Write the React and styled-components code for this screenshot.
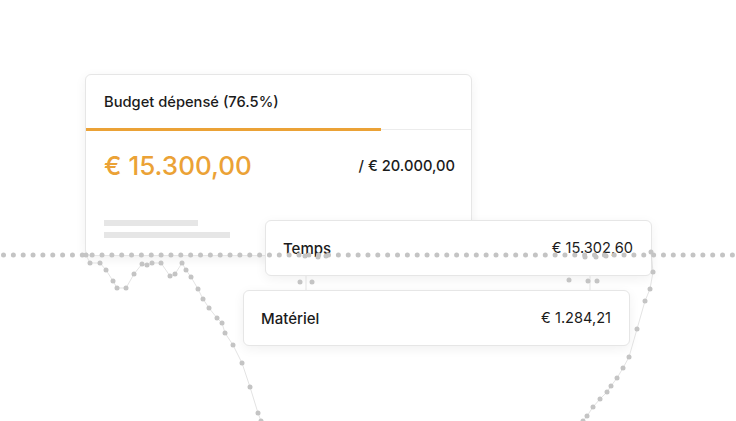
import React from 'react'
import styled, { createGlobalStyle } from 'styled-components'

const GlobalStyle = createGlobalStyle`
  body {
    margin: 0;
    background: #ffffff;
    font-family: Inter, "Noto Sans", "Liberation Sans", sans-serif;
    color: #1b1b1b;
  }
`

const Stage = styled.div`
  position: relative;
  width: 736px;
  height: 421px;
  overflow: hidden;
  background: #ffffff;
`

const Scene = styled.div`
  display: flex;
  flex-direction: column;
  align-items: flex-start;
  padding: 74px 0 0 85px;
`

const Card = styled.div`
  position: relative;
  box-sizing: border-box;
  background: #ffffff;
  border: 1px solid #e6e6e6;
  border-radius: 6px;
  box-shadow: 0 3px 12px rgba(0, 0, 0, 0.06);
`

const BudgetCard = styled(Card)`
  width: 387px;
  height: 182px;
  display: flex;
  flex-direction: column;
`

const CardHeader = styled.div`
  height: 53px;
  display: flex;
  align-items: center;
  padding: 0 18px;
  font-size: 14.7px;
  font-weight: 500;
`

const Progress = styled.div`
  height: 3px;
  display: flex;
  align-items: center;
`

const ProgressFill = styled.div`
  height: 3px;
  background: #eba236;
`

const ProgressRest = styled.div`
  flex: 1;
  height: 1px;
  background: #ececec;
`

const AmountRow = styled.div`
  display: flex;
  align-items: center;
  justify-content: space-between;
  margin-top: 19px;
  padding: 0 16px 0 18px;
`

const Spent = styled.span`
  font-size: 26px;
  line-height: 32px;
  font-weight: 500;
  color: #eba236;
`

const Total = styled.span`
  font-size: 14.7px;
  font-weight: 500;
`

const Skeleton = styled.div`
  display: flex;
  flex-direction: column;
  gap: 6px;
  margin-top: 38px;
  padding-left: 18px;
`

const SkeletonBar = styled.div`
  width: ${p => p.$w}px;
  height: 6px;
  background: #e6e6e6;
`

const LineCard = styled(Card)`
  width: 387px;
  height: 56px;
  display: flex;
  align-items: center;
  justify-content: space-between;
  padding: 0 18px 0 17px;
  margin-left: ${p => p.$indent}px;
  margin-top: ${p => p.$top}px;
`

const LineLabel = styled.span`
  font-size: 15px;
  font-weight: 500;
`

const LineValue = styled.span`
  font-size: 14.6px;
  font-weight: 400;
`

const Overlay = styled.svg`
  position: absolute;
  inset: 0;
  width: 736px;
  height: 421px;
  pointer-events: none;
`

const leftCurve = [
  [86, 255], [90, 263], [100, 263], [106, 270], [113, 281], [117, 288], [126, 288],
  [134, 274], [142, 264], [147, 265], [152, 263], [161, 263], [170, 276], [175, 274],
  [182, 263], [186, 270], [191, 277], [198, 289], [203, 299], [209, 308], [217, 318],
  [222, 323], [225, 333], [233, 345], [242, 363], [250, 387], [258, 413], [261, 421],
]

const rightCurve = [
  [651, 252], [653, 272], [650, 289], [645, 301], [637, 329], [629, 357], [623, 368],
  [617, 378], [611, 386], [607, 392], [600, 399], [593, 407], [587, 416], [583, 421],
]

const extraDots = [
  [300, 282], [312, 282], [569, 280], [588, 281], [597, 281],
  [305, 256], [318, 257], [326, 256], [585, 257], [596, 257], [606, 256],
]

const rowDots = []
for (let x = 3.5; x < 736; x += 9.85) rowDots.push([x, 255])

const toPoints = pts => pts.map(p => p.join(',')).join(' ')

const DottedLines = () => (
  <Overlay viewBox="0 0 736 421">
    <g fill="none" stroke="#dcdcdc" strokeWidth="0.8">
      <polyline points={toPoints(leftCurve)} />
      <polyline points={toPoints(rightCurve)} />
      <line x1="306" y1="276" x2="306" y2="290" />
      <line x1="590" y1="276" x2="590" y2="290" />
    </g>
    <g fill="#c4c4c4">
      {[...rowDots, ...leftCurve, ...rightCurve, ...extraDots].map(([x, y], i) => (
        <circle key={i} cx={x} cy={y} r="2.5" />
      ))}
    </g>
  </Overlay>
)

const App = () => {
  const pct = 76.5
  return (
    <Stage>
      <GlobalStyle />
      <Scene>
        <BudgetCard>
          <CardHeader>Budget dépensé ({pct}%)</CardHeader>
          <Progress>
            <ProgressFill style={{ width: `${pct}%` }} />
            <ProgressRest />
          </Progress>
          <AmountRow>
            <Spent>€ 15.300,00</Spent>
            <Total>/ € 20.000,00</Total>
          </AmountRow>
          <Skeleton>
            <SkeletonBar $w={94} />
            <SkeletonBar $w={126} />
          </Skeleton>
        </BudgetCard>
        <LineCard $indent={180} $top={-36}>
          <LineLabel>Temps</LineLabel>
          <LineValue>€ 15.302,60</LineValue>
        </LineCard>
        <LineCard $indent={158} $top={14}>
          <LineLabel>Matériel</LineLabel>
          <LineValue>€ 1.284,21</LineValue>
        </LineCard>
      </Scene>
      <DottedLines />
    </Stage>
  )
}

export default App
